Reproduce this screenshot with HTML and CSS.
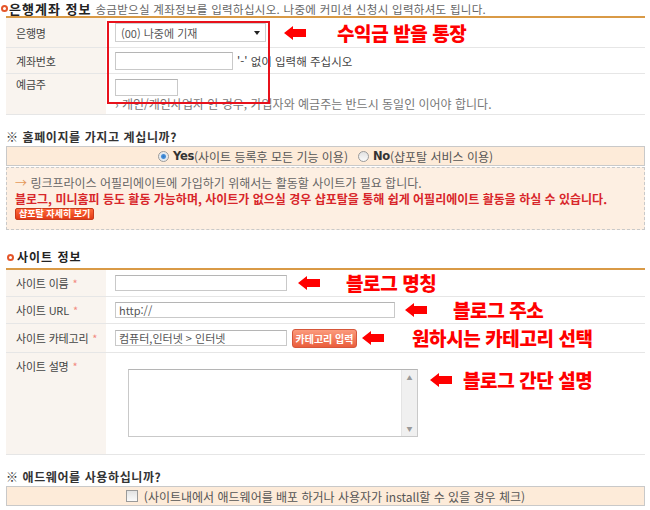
FILE: index.html
```html
<!DOCTYPE html>
<html lang="ko">
<head>
    <meta charset="UTF-8">
    <title>제휴 신청</title>
    <link rel="stylesheet" href="styles.css">
</head>
<body>
<div class="page">
    <div class="sec-title first"><span class="dot"></span><b class="big">은행계좌 정보</b><span class="desc">송금받으실 계좌정보를 입력하십시오. 나중에 커미션 신청시 입력하셔도 됩니다.</span></div>

    <div class="form-table bank">
        <div class="row r-bank">
            <div class="label">은행명</div>
            <div class="field">
                <div class="select"><select><option>(00) 나중에 기재</option></select></div>
                <svg class="arrow a-bank" viewBox="0 0 22 14"><polygon points="0,7 9,0 9,3 22,3 22,11 9,11 9,14"/></svg>
                <span class="memo m-bank">수익금 받을 통장</span>
            </div>
        </div>
        <div class="row r-account">
            <div class="label">계좌번호</div>
            <div class="field">
                <input type="text" class="in-account">
                <span class="hint">'-' 없이 입력해 주십시오</span>
            </div>
        </div>
        <div class="row r-owner">
            <div class="label top">예금주</div>
            <div class="field col">
                <input type="text" class="in-owner">
                <span class="note">› 개인/개인사업자 인 경우, 가입자와 예금주는 반드시 동일인 이어야 합니다.</span>
            </div>
        </div>
        <div class="mark-box"></div>
    </div>

    <div class="question">※ 홈페이지를 가지고 계십니까?</div>
    <div class="choice">
        <label><input type="radio" name="site" checked><b>Yes</b>(사이트 등록후 모든 기능 이용)</label>
        <label><input type="radio" name="site"><b>No</b>(샵포탈 서비스 이용)</label>
    </div>
    <div class="notice">
        <p><span class="go">→</span> 링크프라이스 어필리에이트에 가입하기 위해서는 활동할 사이트가 필요 합니다.</p>
        <p class="warn">블로그, 미니홈피 등도 활동 가능하며, 사이트가 없으실 경우 샵포탈을 통해 쉽게 어필리에이트 활동을 하실 수 있습니다.</p>
        <button class="btn-small">샵포탈 자세히 보기</button>
    </div>

    <div class="sec-title site"><span class="dot"></span><b>사이트 정보</b></div>
    <div class="form-table">
        <div class="row r-name">
            <div class="label">사이트 이름 <span class="req">*</span></div>
            <div class="field">
                <input type="text" class="in-name">
                <svg class="arrow a-name" viewBox="0 0 22 14"><polygon points="0,7 9,0 9,3 22,3 22,11 9,11 9,14"/></svg>
                <span class="memo m-name">블로그 명칭</span>
            </div>
        </div>
        <div class="row r-url">
            <div class="label">사이트 URL <span class="req">*</span></div>
            <div class="field">
                <input type="text" class="in-url" value="http://">
                <svg class="arrow a-url" viewBox="0 0 22 14"><polygon points="0,7 9,0 9,3 22,3 22,11 9,11 9,14"/></svg>
                <span class="memo m-url">블로그 주소</span>
            </div>
        </div>
        <div class="row r-cat">
            <div class="label">사이트 카테고리 <span class="req">*</span></div>
            <div class="field">
                <input type="text" class="in-cat" value="컴퓨터,인터넷 > 인터넷">
                <button class="btn-cat">카테고리 입력</button>
                <svg class="arrow a-cat" viewBox="0 0 22 14"><polygon points="0,7 9,0 9,3 22,3 22,11 9,11 9,14"/></svg>
                <span class="memo m-cat">원하시는 카테고리 선택</span>
            </div>
        </div>
        <div class="row r-desc">
            <div class="label top">사이트 설명 <span class="req">*</span></div>
            <div class="field top">
                <div class="textbox">
                    <textarea class="in-desc"></textarea>
                    <div class="scroll"><span>▲</span><span>▼</span></div>
                </div>
                <svg class="arrow a-desc" viewBox="0 0 22 14"><polygon points="0,7 9,0 9,3 22,3 22,11 9,11 9,14"/></svg>
                <span class="memo m-desc">블로그 간단 설명</span>
            </div>
        </div>
    </div>

    <div class="question q-ad">※ 애드웨어를 사용하십니까?</div>
    <div class="choice">
        <label><input type="checkbox">(사이트내에서 애드웨어를 배포 하거나 사용자가 install할 수 있을 경우 체크)</label>
    </div>
</div>
</body>
</html>
```

FILE: styles.css
```css
* {
    box-sizing: border-box;
}
body {
    margin: 0;
    font-family: "Noto Sans CJK KR", sans-serif;
    font-size: 12px;
    color: #555;
    background: #fff;
}
.page {
    padding: 0 5px 0 6px;
}
.sec-title {
    display: flex;
    align-items: center;
    line-height: 14px;
    font-size: 12px;
    color: #222;
}
.sec-title.first {
    margin-left: -5px;
    height: 16px;
    padding-top: 1px;
}
.sec-title .big {
    font-size: 13px;
    letter-spacing: 1px;
}
.sec-title .desc {
    margin-left: 4px;
    font-size: 11.5px;
    letter-spacing: 0.3px;
    color: #666;
}
.sec-title.site {
    margin-top: 20px;
    height: 18px;
    padding-bottom: 4px;
    padding-left: 1px;
}
.sec-title.site b {
    margin-left: 2px;
    letter-spacing: 1px;
}
.dot {
    width: 7px;
    height: 7px;
    border: 2px solid #e5562a;
    border-radius: 50%;
    margin-right: 1px;
}
.form-table {
    border-top: 2px solid #d99a46;
    position: relative;
}
.row {
    display: flex;
    border-bottom: 1px solid #e6e6e6;
}
.label {
    width: 100px;
    flex-shrink: 0;
    background: #f9f4ef;
    padding-left: 10px;
    display: flex;
    align-items: center;
    white-space: nowrap;
    font-size: 11px;
    letter-spacing: -0.2px;
    color: #444;
}
.label.top {
    align-items: flex-start;
}
.field {
    flex: 1;
    display: flex;
    align-items: center;
    padding-left: 9px;
}
.field.col {
    flex-direction: column;
    align-items: flex-start;
}
.field.top {
    align-items: flex-start;
}
input[type=text], textarea {
    font-family: inherit;
    font-size: 11px;
    color: #555;
    border: 1px solid #c9c9c9;
    border-top-color: #b5b5b5;
    padding: 0 3px;
    margin: 0;
    outline: none;
}
.r-bank { height: 30px; }
.r-account { height: 26px; }
.r-owner { height: 41px; }
.r-owner .label { padding-top: 2px; }
.r-owner .field { padding-top: 5px; }

.select {
    position: relative;
    width: 151px;
    height: 19px;
}
.select select {
    appearance: none;
    width: 100%;
    height: 100%;
    border: 1px solid #cfcfcf;
    background: #fff;
    font-family: inherit;
    font-size: 11px;
    color: #555;
    padding: 0 5px;
    margin: 0;
}
.select::after {
    content: "";
    position: absolute;
    right: 6px;
    top: 8px;
    border-left: 3px solid transparent;
    border-right: 3px solid transparent;
    border-top: 4px solid #222;
}
.in-account { width: 118px; height: 18px; }
.hint {
    margin-left: 4px;
    font-size: 11.5px;
    color: #444;
}
.in-owner { width: 63px; height: 17px; }
.note {
    margin-top: 1px;
    line-height: 14px;
    color: #777;
}
.mark-box {
    position: absolute;
    left: 101px;
    top: 3px;
    width: 163px;
    height: 83px;
    border: 2px solid #e8111b;
}
.arrow {
    width: 22px;
    height: 14px;
    fill: #f00;
    flex-shrink: 0;
}
.memo {
    color: #f00;
    font-size: 19px;
    font-weight: 900;
    letter-spacing: -0.4px;
    line-height: 20px;
    white-space: nowrap;
}
.a-bank { margin-left: 18px; }
.m-bank { margin-left: 31px; }

.question {
    margin-top: 15px;
    line-height: 14px;
    font-size: 12px;
    font-weight: bold;
    color: #333;
    letter-spacing: 0.6px;
}
.choice {
    margin-top: 2px;
    height: 20px;
    background: #fdebd9;
    border: 1px solid #c9c9c9;
    display: flex;
    justify-content: center;
    align-items: center;
    gap: 10px;
    font-size: 12px;
    color: #555;
}
.choice label {
    display: flex;
    align-items: center;
}
.choice b {
    font-family: "DejaVu Sans", sans-serif;
    font-size: 11.5px;
    color: #333;
    letter-spacing: -0.3px;
}
input[type=radio], input[type=checkbox] {
    appearance: none;
    width: 11px;
    height: 11px;
    margin: 0 4px 0 0;
    border: 1px solid #9a9a9a;
    background: linear-gradient(#e2e2e2, #fafafa);
}
input[type=radio] {
    border-radius: 50%;
}
input[type=radio]:checked {
    background: radial-gradient(circle, #2a78c8 0, #4a90d8 2px, #dfe7ef 3px, #f0f0f0 5px);
}
input[type=checkbox] {
    width: 12px;
    height: 12px;
    margin-right: 6px;
}
.notice {
    margin-top: 1px;
    height: 63px;
    background: #fdefe2;
    border: 1px dashed #c9c9c9;
    padding: 7px 8px 0;
    color: #666;
}
.notice p {
    margin: 0;
    line-height: 16px;
}
.go {
    color: #e59a5a;
}
.warn {
    color: #d8262a;
    font-weight: bold;
}
.btn-small {
    display: block;
    margin-top: 1px;
    height: 12px;
    padding: 0 3px;
    border: 1px solid #c83a1c;
    border-radius: 2px;
    background: linear-gradient(#ff6a3a, #e33b16);
    color: #fff;
    font-family: inherit;
    font-size: 9px;
    font-weight: bold;
    line-height: 10px;
}

.r-name, .r-url { height: 27px; }
.r-cat { height: 29px; }
.r-desc { height: 102px; }
.r-desc .label { padding-top: 5px; }
.req {
    color: #f28a80;
    margin-left: 4px;
}
.in-name { width: 172px; height: 16px; }
.a-name { margin-left: 11px; }
.m-name { margin-left: 26px; }
.in-url { width: 280px; height: 16px; }
.a-url { margin-left: 10px; }
.m-url { margin-left: 26px; }
.in-cat { width: 172px; height: 16px; font-size: 12px; color: #444; }
.btn-cat {
    margin-left: 5px;
    width: 65px;
    height: 19px;
    padding: 0;
    border: 1px solid #d6563a;
    border-radius: 3px;
    background: linear-gradient(#fb9a7c, #ea5e3c);
    color: #fff;
    font-family: inherit;
    font-size: 10px;
    font-weight: bold;
}
.a-cat { margin-left: 5px; }
.m-cat { margin-left: 28px; }
.textbox {
    margin: 16px 0 0 13px;
    width: 290px;
    height: 68px;
    display: flex;
    border: 1px solid #c9c9c9;
    border-top-color: #b5b5b5;
}
.in-desc {
    flex: 1;
    border: none;
    resize: none;
    overflow: hidden;
}
.scroll {
    width: 16px;
    background: #f0f0f0;
    border-left: 1px solid #e4e4e4;
    display: flex;
    flex-direction: column;
    justify-content: space-between;
    align-items: center;
    padding: 4px 0 3px;
    font-size: 6px;
    line-height: 8px;
    color: #999;
}
.a-desc { margin: 20px 0 0 12px; }
.m-desc { margin: 17px 0 0 11px; }

.q-ad {
    margin-top: 15px;
}
```
